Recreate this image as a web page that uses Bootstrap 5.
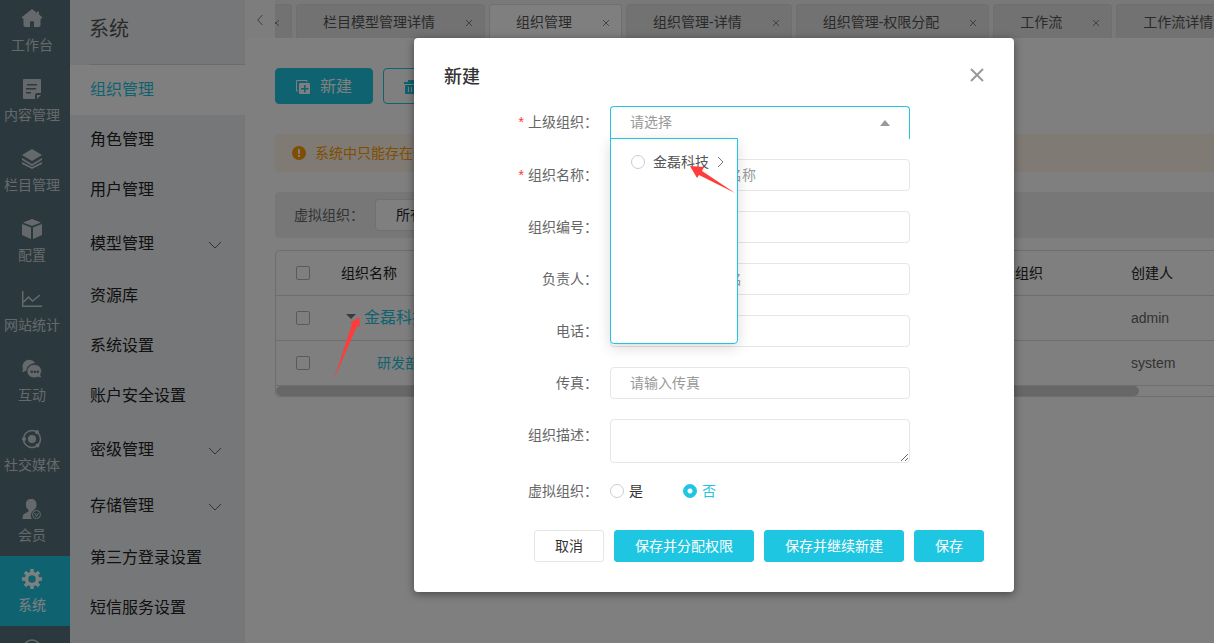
<!DOCTYPE html>
<html lang="zh-CN">
<head>
<meta charset="utf-8">
<meta name="viewport" content="width=device-width, initial-scale=1">
<title>组织管理</title>
<link href="https://cdn.jsdelivr.net/npm/bootstrap@5.3.0/dist/css/bootstrap.min.css" rel="stylesheet">
<style>
:root{--brand:#1fc6e1;--line:#e6e6e6;--rail:#56727c;--side:#ebeff2}
body{font-family:"Liberation Sans","Noto Sans CJK SC",sans-serif;font-size:14px;line-height:20px;color:#333;overflow:hidden}
a{text-decoration:none}
.frame{height:100vh;overflow:hidden}
.app{min-width:1428px;height:100vh;overflow:hidden;background:#fff}
/* icon rail */
.rail{width:70px;background:var(--rail)}
.rail-link{height:70px;padding:0 6px 11px 0;gap:6px;color:#ccd3d8;flex:none;white-space:nowrap}
.rail-link:first-child{height:66px}
.rail-link.active{background:var(--brand);color:#fff}
.rail-link.more{padding-bottom:37px}
.rail-link svg{width:20px;height:20px;fill:currentColor;flex:none}
/* second level menu */
.side{width:175px;background:var(--side)}
.side-title{height:65px;margin-left:19px;padding-bottom:6px;font-size:20px;border-bottom:1px solid #cfd9df;color:#555}
.side-link{height:50px;padding:0 20px;font-size:16px;color:#222;flex:none}
.side-link.tall{height:56px;padding-top:2px}
.side-link.active{background:#fff;color:var(--brand)}
.side-link svg{width:14px;height:8px;fill:none;stroke:#666;margin:2px 3px 0 0}
/* opened pages */
.tabs{height:38px;background:#f3f3f3;gap:4px}
.tab-prev{width:30px;height:38px;background:#fafafa;border:0;margin-right:-4px;padding:0 0 0 0}
.tab-prev svg{width:6px;height:10px;fill:none;stroke:#777}
.page-tab{height:34px;padding:0 11px 0 26px;background:#e4e4e4;border:1px solid #dfdfdf;border-bottom:0;border-radius:4px 4px 0 0;color:#555;white-space:nowrap;gap:30px}
.page-tab.active{background:#fff}
.page-tab.cut{padding:0 11px 0 0;width:17px;border-left:0;border-radius:0 4px 0 0;overflow:hidden}
.cross{width:8px;height:8px;padding:1px;margin-top:2px;fill:none;stroke:#666;flex:none}
.work{padding:30px 30px 0}
.btn-brand{--bs-btn-bg:#1fc6e1;--bs-btn-color:#fff;--bs-btn-border-color:#1fc6e1;--bs-btn-hover-bg:#1ab2ca;--bs-btn-hover-color:#fff}
.btn-line{--bs-btn-color:#1fc6e1;--bs-btn-border-color:#1fc6e1}
.tools{gap:10px}
.btn-tool{height:36px;padding:2px 20px 0;font-size:16px;line-height:24px;gap:10px;border-radius:4px}
.btn-tool svg{width:14px;height:14px}
.notice{height:38px;margin-top:30px;padding:0 17px;background:#fff5e8;color:#ff9c00;border-radius:4px;gap:9px}
.filters{height:46px;margin-top:20px;padding:0 19px;background:#efefef;border-radius:4px;gap:11px}
.filters label{color:#666}
.filters select{width:140px;height:32px;padding:0 20px;font-size:14px;border-color:#e0e0e0;border-radius:4px}
.grid-box{margin-top:12px;border:1px solid #dcdcdc;border-radius:4px}
.grid-box table{table-layout:fixed;margin:0}
.grid-box th,.grid-box td{height:45px;padding:0;font-weight:400;border-bottom:1px solid #dcdcdc;vertical-align:middle;color:#666}
.grid-box th{height:44px;color:#222}
.grid-box td a{color:var(--brand)}
.grid-box td .root{font-size:16px}
.grid-box td .child{padding-left:36px}
.grid-box .form-check-input{display:block;width:14px;height:14px;margin:0 0 0 20px;border:1px solid #b5b5b5;border-radius:2px}
.caret{width:0;border:5px solid transparent;border-top-color:#777;border-bottom:0;margin:0 8px 3px 5px}
.thumb{width:77%;height:10px;border-radius:5px;background:#cfcfcf}
/* dialog */
.dialog{width:600px;margin-top:38px;padding:27px 30px 30px;background:#fff;border-radius:4px;box-shadow:0 2px 8px rgba(0,0,0,.45)}
.dialog h1{font-size:18px;line-height:24px;margin:0;color:#333}
.dialog-close{width:14px;height:20px;border:0;padding:0;background:none}
.dialog-close svg{width:14px;height:14px;fill:none;stroke:#999;stroke-width:2;display:block}
.form-rows{margin-top:17px}
.form-row{display:flex;margin-bottom:20px}
.form-row>.tag{width:166px;padding:6px 12px 0 0;text-align:right;color:#666;flex:none}
.tag b{color:#f33;font-weight:400;margin-right:4px}
.field{width:300px}
.field .form-control,.field .form-select{height:32px;padding:0 19px;font-size:14px;border-color:var(--line);border-radius:4px}
.field textarea.form-control{height:44px;min-height:44px}
.form-control::placeholder{color:#999}
.field .form-select.opened{height:33px;padding-bottom:2px;color:#999;border-color:var(--brand);border-bottom:0;border-radius:4px 4px 0 0;background:#fff url("data:image/svg+xml,%3Csvg xmlns='http://www.w3.org/2000/svg' viewBox='0 0 10 6'%3E%3Cpath fill='%23999' d='M0 6 5 0l5 6z'/%3E%3C/svg%3E") no-repeat right 19px center/10px 6px}
.cascade{position:absolute;top:32px;left:0;width:128px;height:206px;padding:13px 12px 0 20px;background:#fff;border:1px solid var(--brand);border-radius:0 0 4px 4px;box-shadow:0 4px 14px rgba(0,0,0,.14);z-index:3}
.cascade label{color:#555}
.cascade svg.next{width:8px;height:10px;fill:none;stroke:#777;margin-left:auto}
.dot{width:14px!important;height:14px!important;margin:0!important;border:1px solid #ccc;flex:none}
.dot:checked{background:radial-gradient(circle,#fff 0 2px,#1fc6e1 3px);border-color:var(--brand)}
.pointer{position:absolute;fill:#ff3b3b}
.pointer-menu{left:79px;top:26px;width:46px;height:29px}
.pointer-tree{left:333px;top:316px;width:28px;height:64px;z-index:1060}
.choices{gap:40px;height:20px}
.choices label{color:#333;gap:5px}
.choices label.on{color:var(--brand)}
.last-row{margin:18px 0 0}
.actions{gap:10px;margin-top:29px}
.actions .btn{height:32px;padding:0 20px;font-size:14px;line-height:20px;border-radius:3px}
.actions .btn-plain{border-color:var(--line);color:#333}
</style>
</head>
<body>
<div class="frame">
<div class="app position-relative d-flex">
  <nav class="rail d-flex flex-column flex-shrink-0 overflow-hidden" aria-label="主导航">
    <a href="#" class="rail-link d-flex flex-column align-items-center justify-content-end"><svg viewBox="0 0 20 20"><path d="M10 0 0 8v1.500h1.500V16q0 2 2 2H8v-5q2-2 4 0v5h4.500q2 0 2-2V9.500H20V8l-3-2.400V2.500h-2V4z"/></svg>工作台</a>
    <a href="#" class="rail-link d-flex flex-column align-items-center justify-content-end"><svg viewBox="0 0 20 20"><path fill-rule="evenodd" d="M2 0h16q1 0 1 1v13h-4q-2 0-2 2v4H2q-1 0-1-1V1q0-1 1-1zm3 5v1.500h10V5zm-1 4v1.500h10V9zm0 4v1.500h5V13zM15 16h4l-4 4z"/></svg>内容管理</a>
    <a href="#" class="rail-link d-flex flex-column align-items-center justify-content-end"><svg viewBox="0 0 20 20"><path d="m10 0 10 6-10 6L0 6z"/><path d="m0 9 10 6 10-6v2l-10 6L0 11zM0 13l10 5 10-5v2l-10 5-10-5z"/></svg>栏目管理</a>
    <a href="#" class="rail-link d-flex flex-column align-items-center justify-content-end"><svg viewBox="0 0 20 20"><path d="m10 0 9 3.500-9 3.500-9-3.500zM0 5l9 3.500V20l-9-4zM20 5l-9 3.500V20l9-4z"/></svg>配置</a>
    <a href="#" class="rail-link d-flex flex-column align-items-center justify-content-end"><svg viewBox="0 0 20 20"><path d="M.7 2v15.300H20M1.500 13l5-5 4 4L18 6" fill="none" stroke="currentColor" stroke-width="1.500"/></svg>网站统计</a>
    <a href="#" class="rail-link d-flex flex-column align-items-center justify-content-end"><svg viewBox="0 0 20 20"><path d="M13 4A7 6.500 0 0 0 1 9.500L.5 13l3.500-1.200C5 7 8.500 4.500 13 4z"/><path d="M4.500 11.500A7 7 0 0 1 13 4 6.500 6.500 0 1 0 1.500 11L0 13z"/><path fill-rule="evenodd" stroke="var(--rail)" stroke-width=".8" d="M12.500 5.500a7 6.500 0 0 1 6 10l1.200 3.500-4-1A7.200 6.700 0 1 1 12.500 5.500zM9 12v1.500h1.500V12zm3 0v1.500h1.500V12zm3 0v1.500h1.500V12z"/></svg>互动</a>
    <a href="#" class="rail-link d-flex flex-column align-items-center justify-content-end"><svg viewBox="0 0 20 20"><circle cx="10" cy="10" r="8.500" fill="none" stroke="currentColor" stroke-width="1.500"/><circle cx="10" cy="10" r="4"/><circle cx="15" cy="3" r="2"/><circle cx="2" cy="10" r="2"/><circle cx="15.500" cy="16.500" r="2"/></svg>社交媒体</a>
    <a href="#" class="rail-link d-flex flex-column align-items-center justify-content-end"><svg viewBox="0 0 20 20"><path d="M9 0C5.500 0 3.500 2.500 4 6c0 2.500 1 4 2.500 5v1.500L2 15q-1.500 1-1.500 5H10a6 6 0 0 1 2-9C14 9 14.500 8 14.500 5.500 14.500 2 12.500 0 9 0z"/><circle cx="14.500" cy="15.500" r="4" fill="none" stroke="currentColor"/><path d="m12.500 14 2 3.500 2-3.500" fill="none" stroke="currentColor"/></svg>会员</a>
    <a href="#" class="rail-link active d-flex flex-column align-items-center justify-content-end"><svg viewBox="0 0 20 20"><circle cx="10" cy="10" r="5.500" fill="none" stroke="currentColor" stroke-width="3.500"/><path d="M10 0v4M10 16v4M0 10h4M16 10h4M3 3l3 3M14 14l3 3M17 3l-3 3M6 14l-3 3" stroke="currentColor" stroke-width="3.500"/></svg>系统</a>
    <a href="#" class="rail-link more d-flex flex-column align-items-center justify-content-end" aria-label="更多"><svg viewBox="0 0 20 20"><circle cx="10" cy="9" r="8" fill="none" stroke="currentColor" stroke-width="1.500"/><circle cx="10" cy="8" r="4"/></svg></a>
  </nav>

  <aside class="side d-flex flex-column flex-shrink-0 overflow-hidden">
    <div class="side-title d-flex align-items-center flex-shrink-0">系统</div>
    <a href="#" class="side-link active d-flex align-items-center">组织管理</a>
    <a href="#" class="side-link d-flex align-items-center">角色管理</a>
    <a href="#" class="side-link d-flex align-items-center">用户管理</a>
    <a href="#" class="side-link tall d-flex align-items-center justify-content-between">模型管理<svg viewBox="0 0 14 8"><path d="m1 1 6 6 6-6"/></svg></a>
    <a href="#" class="side-link d-flex align-items-center">资源库</a>
    <a href="#" class="side-link d-flex align-items-center">系统设置</a>
    <a href="#" class="side-link d-flex align-items-center">账户安全设置</a>
    <a href="#" class="side-link tall d-flex align-items-center justify-content-between">密级管理<svg viewBox="0 0 14 8"><path d="m1 1 6 6 6-6"/></svg></a>
    <a href="#" class="side-link tall d-flex align-items-center justify-content-between">存储管理<svg viewBox="0 0 14 8"><path d="m1 1 6 6 6-6"/></svg></a>
    <a href="#" class="side-link d-flex align-items-center">第三方登录设置</a>
    <a href="#" class="side-link d-flex align-items-center">短信服务设置</a>
  </aside>

  <main class="flex-grow-1 overflow-hidden">
    <div class="tabs d-flex align-items-end">
      <button type="button" class="tab-prev" aria-label="向左"><svg viewBox="0 0 6 10"><path d="M5.500 0 .7 5l4.800 5"/></svg></button>
      <a href="#" class="page-tab cut d-flex align-items-center justify-content-end" aria-label="上一页签"><svg class="cross" viewBox="0 0 8 8"><path d="m0 0 8 8M8 0 0 8"/></svg></a>
      <a href="#" class="page-tab d-flex align-items-center">栏目模型管理详情<svg class="cross" viewBox="0 0 8 8"><path d="m0 0 8 8M8 0 0 8"/></svg></a>
      <a href="#" class="page-tab active d-flex align-items-center">组织管理<svg class="cross" viewBox="0 0 8 8"><path d="m0 0 8 8M8 0 0 8"/></svg></a>
      <a href="#" class="page-tab d-flex align-items-center">组织管理-详情<svg class="cross" viewBox="0 0 8 8"><path d="m0 0 8 8M8 0 0 8"/></svg></a>
      <a href="#" class="page-tab d-flex align-items-center">组织管理-权限分配<svg class="cross" viewBox="0 0 8 8"><path d="m0 0 8 8M8 0 0 8"/></svg></a>
      <a href="#" class="page-tab d-flex align-items-center">工作流<svg class="cross" viewBox="0 0 8 8"><path d="m0 0 8 8M8 0 0 8"/></svg></a>
      <a href="#" class="page-tab d-flex align-items-center">工作流详情<svg class="cross" viewBox="0 0 8 8"><path d="m0 0 8 8M8 0 0 8"/></svg></a>
    </div>
    <div class="work">
      <div class="tools d-flex">
        <button type="button" class="btn btn-brand btn-tool d-flex align-items-center"><svg viewBox="0 0 14 14"><path d="M2 11H.5V.5H11V2" fill="none" stroke="#fff"/><path fill="#fff" fill-rule="evenodd" d="M4 3h9q1 0 1 1v9q0 1-1 1H4q-1 0-1-1V4q0-1 1-1zm4 2v3H5v1.500h3v3h1.500v-3h3V8h-3V5z"/></svg>新建</button>
        <button type="button" class="btn btn-line btn-tool d-flex align-items-center" aria-label="删除"><svg viewBox="0 0 14 14" fill="#1fc6e1"><path fill-rule="evenodd" d="M4 0h6v2h4v2H0V2h4zM1 5h12v9H1zm3 2v5h1V7zm3 0v5h1V7zm3 0v5h1V7z"/></svg></button>
      </div>
      <div class="notice d-flex align-items-center"><svg width="14" height="14" viewBox="0 0 14 14"><circle cx="7" cy="7" r="7" fill="#ff9c00"/><path d="M7 3v5M7 9v2" stroke="#fff" stroke-width="2"/></svg>系统中只能存在一个根组织</div>
      <div class="filters d-flex align-items-center">
        <label for="virtual">虚拟组织：</label>
        <select id="virtual" class="form-select"><option>所有</option></select>
      </div>
      <div class="grid-box">
        <table class="table">
          <colgroup><col style="width:65px"><col style="width:646px"><col style="width:144px"><col></colgroup>
          <thead><tr><th><input class="form-check-input" type="checkbox" aria-label="全选"></th><th>组织名称</th><th>上级组织</th><th>创建人</th></tr></thead>
          <tbody>
            <tr><td><input class="form-check-input" type="checkbox" aria-label="选择金磊科技"></td><td><div class="d-flex align-items-center"><span class="caret"></span><a href="#" class="root">金磊科技</a></div></td><td></td><td>admin</td></tr>
            <tr><td><input class="form-check-input" type="checkbox" aria-label="选择研发部"></td><td><a href="#" class="child d-block">研发部</a></td><td></td><td>system</td></tr>
          </tbody>
        </table>
        <div class="thumb"></div>
      </div>
    </div>
  </main>

  <div class="modal-backdrop show position-absolute w-100 h-100"></div>
  <div class="modal d-block position-absolute overflow-hidden" role="dialog" aria-labelledby="dlg">
    <form class="dialog mx-auto">
      <div class="d-flex justify-content-between">
        <h1 id="dlg">新建</h1>
        <button type="button" class="dialog-close" aria-label="关闭"><svg viewBox="0 0 14 14"><path d="m1 1 12 12M13 1 1 13"/></svg></button>
      </div>
      <div class="form-rows">
        <div class="form-row"><label class="tag" for="parent"><b>*</b>上级组织：</label>
          <div class="field position-relative">
            <select id="parent" class="form-select opened shadow-none"><option>请选择</option></select>
            <div class="cascade">
              <label class="d-flex align-items-center"><input class="form-check-input dot" type="radio" name="org"><span class="ps-2">金磊科技</span><svg class="next" viewBox="0 0 8 10"><path d="m1 0 5 5-5 5"/></svg></label>
              <svg class="pointer pointer-menu" viewBox="0 0 46 29"><path d="M0 1 14 2 12 6 45 28 9 10 7 13z"/></svg>
            </div>
          </div></div>
        <div class="form-row"><label class="tag" for="name"><b>*</b>组织名称：</label><div class="field"><input id="name" class="form-control" placeholder="请输入组织机构名称"></div></div>
        <div class="form-row"><label class="tag" for="code">组织编号：</label><div class="field"><input id="code" class="form-control" placeholder="请输入编号"></div></div>
        <div class="form-row"><label class="tag" for="head">负责人：</label><div class="field"><input id="head" class="form-control" placeholder="请输入负责人姓名"></div></div>
        <div class="form-row"><label class="tag" for="tel">电话：</label><div class="field"><input id="tel" class="form-control" placeholder="请输入电话"></div></div>
        <div class="form-row"><label class="tag" for="fax">传真：</label><div class="field"><input id="fax" class="form-control" placeholder="请输入传真"></div></div>
        <div class="form-row m-0"><label class="tag" for="desc">组织描述：</label><div class="field"><textarea id="desc" class="form-control"></textarea></div></div>
        <div class="form-row last-row align-items-center"><span class="tag pt-0">虚拟组织：</span>
          <div class="choices d-flex">
            <label class="d-flex align-items-center"><input class="form-check-input dot" type="radio" name="v">是</label>
            <label class="on d-flex align-items-center"><input class="form-check-input dot" type="radio" name="v" checked>否</label>
          </div></div>
      </div>
      <div class="actions d-flex justify-content-end">
        <button type="button" class="btn btn-plain">取消</button>
        <button type="button" class="btn btn-brand">保存并分配权限</button>
        <button type="button" class="btn btn-brand">保存并继续新建</button>
        <button type="submit" class="btn btn-brand">保存</button>
      </div>
    </form>
  </div>
  <svg class="pointer pointer-tree" viewBox="0 0 28 64"><path d="M26 1 27 11 24 10 1 63 19 8 17 7z"/></svg>
</div>
</div>
<script src="https://cdn.jsdelivr.net/npm/bootstrap@5.3.0/dist/js/bootstrap.bundle.min.js"></script>
</body>
</html>
